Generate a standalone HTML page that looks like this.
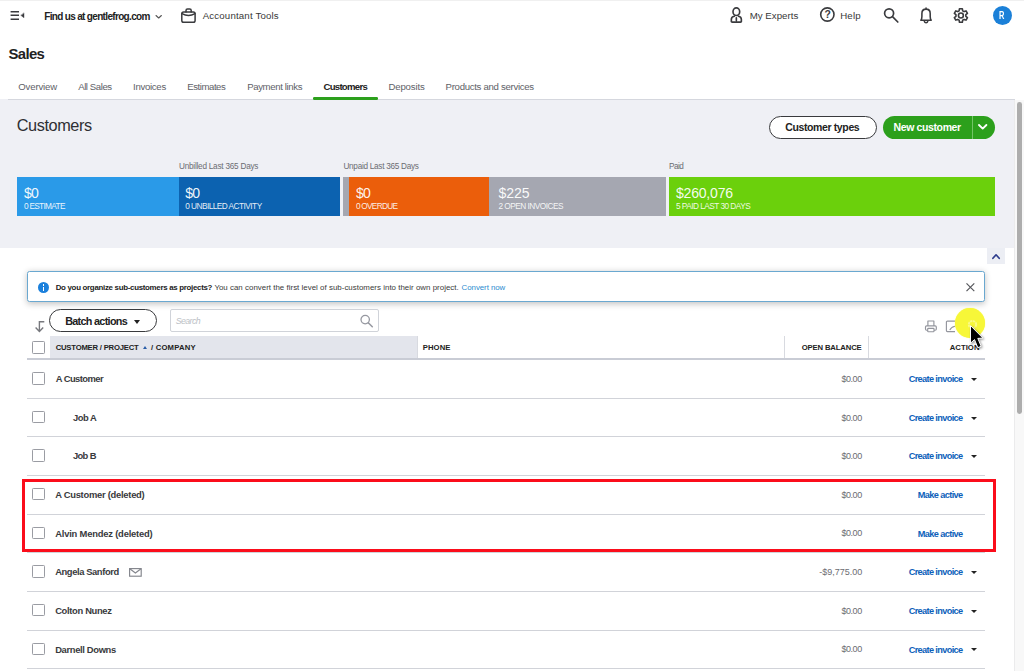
<!DOCTYPE html>
<html><head><meta charset="utf-8">
<style>
*{box-sizing:border-box;margin:0;padding:0}
html,body{width:1024px;height:671px;overflow:hidden;background:#fff;font-family:"Liberation Sans",sans-serif;color:#2b2b2b}
.a{position:absolute}
.t{position:absolute;white-space:nowrap;line-height:1}
.cb{position:absolute;left:32px;width:13px;height:12.5px;border:1px solid #9a9ca3;border-radius:1.3px;background:#fff}
.ln{position:absolute;left:27px;width:958.4px;height:1px;background:#d1d3d9}
.car{position:absolute;left:970.5px;width:0;height:0;border-left:3.2px solid transparent;border-right:3.2px solid transparent;border-top:3.9px solid #222}
svg{position:absolute;overflow:visible}
</style></head><body>
<div class="a" style="left:0;top:0;width:1024px;height:1px;background:#f0f0f0"></div>
<!-- gray band -->
<div class="a" style="left:0;top:99px;width:1014px;height:149.200px;background:#eff0f5"></div>
<div class="a" style="left:8px;top:98.600px;width:1007px;height:1.200px;background:#d5d7de"></div>
<div class="a" style="left:313.400px;top:97.200px;width:65px;height:2.600px;border-radius:1.300px;background:#2ca01c"></div>
<!-- scrollbar -->
<div class="a" style="left:1014.200px;top:99.500px;width:10px;height:572px;background:#f8f8f8;border-left:1.200px solid #ebebec"></div>
<div class="a" style="left:1017.200px;top:102.400px;width:4.800px;height:311.400px;border-radius:2.400px;background:#adadad"></div>

<!-- top bar icons -->
<svg style="left:0;top:0" width="1024" height="32" viewBox="0 0 1024 32" fill="none" stroke="#3a3b3e" stroke-width="1.500" stroke-linecap="round" stroke-linejoin="round">
<path d="M10.600 11.700h8.400M10.600 15.300h8.400M10.600 19.300h8.400" stroke-width="1.600" stroke-linecap="butt"/>
<path d="M24 13.200v4.600l-3-2.300z" fill="#3a3b3e" stroke="#3a3b3e" stroke-width=".4"/>
<path d="M156 15.500l2.700 2.500 2.700-2.500" stroke-width="1.100" stroke="#555"/>
<!-- briefcase -->
<rect x="181.800" y="12" width="13.300" height="10.200" rx="1.800"/>
<path d="M186 12v-1.600a1.500 1.500 0 0 1 1.500-1.500h2.200a1.500 1.500 0 0 1 1.500 1.500V12M182 13.600c4.200 2.500 8.800 2.500 13 0" />
<!-- person -->
<path d="M731.350 21.400V19.300C731.350 17.500 732.500 16.700 734.300 16.300M738.500 16.300C740.300 16.700 741.350 17.500 741.350 19.300V21.400a.8.8 0 0 1-.8.8H732.150a.8.8 0 0 1-.8-.8M736.350 17.800V20.600" stroke-width="1.650"/>
<ellipse cx="736.350" cy="11.650" rx="3.350" ry="3.850" stroke-width="1.650"/>
<!-- help -->
<circle cx="827.350" cy="14.500" r="6.650" stroke-width="1.600"/>
<!-- search -->
<circle cx="889.100" cy="13.300" r="4.500" stroke-width="1.700"/>
<path d="M892.500 16.700l5.300 5.300" stroke-width="1.700"/>
<!-- bell -->
<path d="M920.900 20.300H931.200C930.400 19.300 930.200 18 930.200 16.500V13.400C930.200 10.800 928.400 9.100 926.050 9.100S921.900 10.800 921.900 13.400V16.500C921.900 18 921.700 19.300 920.900 20.300ZM924.400 21.600C924.800 23 927.300 23 927.700 21.600M926.050 9.100V8" stroke-width="1.550"/>
<!-- gear -->
<path d="M962.69 10.83 L962.33 8.75 L959.47 8.75 L959.11 10.83 L957.75 11.61 L955.77 10.88 L954.34 13.37 L955.96 14.72 L955.96 16.28 L954.34 17.63 L955.77 20.12 L957.75 19.39 L959.11 20.17 L959.47 22.25 L962.33 22.25 L962.69 20.17 L964.05 19.39 L966.03 20.12 L967.46 17.63 L965.84 16.28 L965.84 14.72 L967.46 13.37 L966.03 10.88 L964.05 11.61Z" stroke-width="1.600"/>
<circle cx="960.9" cy="15.5" r="2.450" stroke-width="1.600"/>
</svg>
<div class="t" style="left:824.500px;top:9.800px;font-size:10.400px;font-weight:bold;color:#3a3b3e">?</div>
<div class="a" style="left:992.800px;top:6px;width:19px;height:19px;border-radius:50%;background:#1b80d8"></div>

<!-- buttons -->
<div class="a" style="left:768.600px;top:115.500px;width:108.200px;height:23px;border:1.900px solid #393a3d;border-radius:12px;background:#fff"></div>
<div class="a" style="left:883.300px;top:115.600px;width:111.900px;height:23px;border-radius:12px;background:#2ca01c"></div>
<div class="a" style="left:971.600px;top:115.600px;width:1px;height:23px;background:#72c566"></div>
<svg style="left:976px;top:122px" width="14" height="10" viewBox="0 0 14 10"><path d="M3 3l3.700 3.600L10.400 3" stroke="#fff" stroke-width="1.900" fill="none" stroke-linecap="round" stroke-linejoin="round"/></svg>

<!-- tiles -->
<div class="a" style="left:17px;top:177.300px;width:162px;height:38.300px;background:#2a9ae8"></div>
<div class="a" style="left:178.800px;top:177.300px;width:161px;height:38.300px;background:#0c62b0"></div>
<div class="a" style="left:343.300px;top:177.300px;width:146px;height:38.300px;background:#a5a7b1"></div>
<div class="a" style="left:349.300px;top:177.300px;width:139.700px;height:38.300px;background:#eb5e0b"></div>
<div class="a" style="left:489px;top:177.300px;width:177px;height:38.300px;background:#a5a7b1"></div>
<div class="a" style="left:669px;top:177.300px;width:326px;height:38.300px;background:#6bd00c"></div>

<!-- collapse chevron -->
<div class="a" style="left:987px;top:248px;width:17.900px;height:15.800px;background:#eceef4"></div>
<svg style="left:986px;top:248px" width="20" height="16" viewBox="986 248 20 16"><path d="M992.900 258.300l3.150-3.500 3.150 3.500" stroke="#2e3d8d" stroke-width="1.700" fill="none" stroke-linecap="round" stroke-linejoin="round"/></svg>

<!-- banner -->
<div class="a" style="left:27px;top:271.400px;width:958.400px;height:30.800px;border:1.500px solid #6aa8d0;border-radius:2.500px;background:#fff;box-shadow:0 1.500px 6px rgba(0,0,0,.24)"></div>
<div class="a" style="left:38px;top:282px;width:11px;height:11px;border-radius:50%;background:#1b80dc"></div>
<div class="a" style="left:43px;top:284.200px;width:1.400px;height:1.500px;background:#fff"></div>
<div class="a" style="left:43px;top:286.500px;width:1.400px;height:4.200px;background:#fff"></div>
<svg style="left:964.500px;top:281.500px" width="11" height="11" viewBox="0 0 11 11"><path d="M1.500 1.300l7.800 7.800M9.300 1.300l-7.800 7.800" stroke="#55565b" stroke-width="1.150" fill="none"/></svg>

<!-- toolbar -->
<svg style="left:0;top:300px" width="60" height="40" viewBox="0 300 60 40"><path d="M44.300 321.700H39.400V331.200M35.600 327.500l3.800 3.900 3.800-3.900" stroke="#77787d" stroke-width="1.400" fill="none"/></svg>
<div class="a" style="left:48.500px;top:309.400px;width:108.800px;height:23px;border:1.800px solid #393a3d;border-radius:12px;background:#fff"></div>
<div class="a" style="left:133.900px;top:320.300px;width:0;height:0;border-left:3.400px solid transparent;border-right:3.400px solid transparent;border-top:4.200px solid #222"></div>
<div class="a" style="left:170.200px;top:309.300px;width:208.400px;height:22.400px;border:1px solid #d0d3d9;border-radius:2px;background:#fff"></div>
<svg style="left:359px;top:313px" width="16" height="16" viewBox="0 0 16 16"><circle cx="6.200" cy="6.600" r="4.200" stroke="#9698a0" stroke-width="1.300" fill="none"/><path d="M9.300 9.800l4 4" stroke="#9698a0" stroke-width="1.500" stroke-linecap="round"/></svg>
<!-- print/export icons -->
<svg style="left:924px;top:319px" width="14" height="14" viewBox="0 0 14 14" fill="none" stroke="#93959d" stroke-width="1.150" stroke-linejoin="round"><path d="M3.900 6.900V2h6v4.900"/><rect x="1.500" y="6.900" width="10.800" height="4.300" rx="1.100"/><rect x="3.700" y="9.300" width="6.300" height="3.400" rx=".6" fill="#fff"/></svg>
<svg style="left:945px;top:320px" width="12" height="13" viewBox="0 0 12 13" fill="none" stroke="#93959d" stroke-width="1.150" stroke-linejoin="round"><path d="M10 1.100H2.400a1 1 0 0 0-1 1v8.500a1 1 0 0 0 1 1H10"/><path d="M4.800 10c.8-2 2.600-3.300 5.200-3.800"/></svg>

<!-- table header -->
<div class="a" style="left:50.300px;top:336.300px;width:367.200px;height:21.800px;background:#e3e5ec"></div>
<div class="a" style="left:417.300px;top:336.300px;width:1px;height:21.800px;background:#d8dae0"></div>
<div class="a" style="left:784px;top:336.300px;width:1px;height:21.800px;background:#d8dae0"></div>
<div class="a" style="left:867.500px;top:336.300px;width:1px;height:21.800px;background:#d8dae0"></div>
<div class="a" style="left:27px;top:358px;width:958.400px;height:1.800px;background:#c9ccd5"></div>
<div class="cb" style="top:341.300px"></div>
<div class="a" style="left:142.700px;top:345.700px;width:0;height:0;border-left:2.400px solid transparent;border-right:2.400px solid transparent;border-bottom:3px solid #2a5ea8"></div>

<!-- rows -->
<div class="cb" style="top:372.000px"></div><div class="ln" style="top:398px"></div><div class="car" style="top:378px"></div>
<div class="cb" style="top:410.700px"></div><div class="ln" style="top:436px"></div><div class="car" style="top:416.600px"></div>
<div class="cb" style="top:449.400px"></div><div class="ln" style="top:475px"></div><div class="car" style="top:455.300px"></div>
<div class="cb" style="top:487.900px"></div><div class="ln" style="top:514px"></div>
<div class="cb" style="top:526.500px"></div><div class="ln" style="top:552px"></div>
<div class="cb" style="top:565.200px"></div><div class="ln" style="top:591px"></div><div class="car" style="top:571.100px"></div>
<div class="cb" style="top:603.800px"></div><div class="ln" style="top:630px"></div><div class="car" style="top:609.700px"></div>
<div class="cb" style="top:642.500px"></div><div class="ln" style="top:668px"></div><div class="car" style="top:648.300px"></div>
<!-- envelope -->
<svg style="left:129px;top:568.300px" width="13" height="9" viewBox="0 0 13 9" fill="none" stroke="#83858c" stroke-width="1.150"><rect x=".6" y=".6" width="11.600" height="7.600"/><path d="M.8 .8l5.600 4.200 5.600-4.200"/></svg>

<div class="t" style="left:44.20px;top:12.00px;font-size:10px;font-weight:bold;color:#222;letter-spacing:-0.668px;">Find us at gentlefrog.com</div>
<div class="t" style="left:202.70px;top:11.30px;font-size:9.7px;font-weight:normal;color:#383838;letter-spacing:0.159px;">Accountant Tools</div>
<div class="t" style="left:749.70px;top:11.30px;font-size:9.7px;font-weight:normal;color:#383838;letter-spacing:0.016px;">My Experts</div>
<div class="t" style="left:840.20px;top:11.30px;font-size:9.7px;font-weight:normal;color:#383838;letter-spacing:0.188px;">Help</div>
<div class="t" style="left:8.50px;top:47.00px;font-size:14.9px;font-weight:bold;color:#222;letter-spacing:-0.630px;">Sales</div>
<div class="t" style="left:18.30px;top:82.40px;font-size:9.6px;font-weight:normal;color:#606167;letter-spacing:-0.169px;">Overview</div>
<div class="t" style="left:78.20px;top:82.40px;font-size:9.6px;font-weight:normal;color:#606167;letter-spacing:-0.429px;">All Sales</div>
<div class="t" style="left:133.10px;top:82.40px;font-size:9.6px;font-weight:normal;color:#606167;letter-spacing:-0.300px;">Invoices</div>
<div class="t" style="left:187.30px;top:82.40px;font-size:9.6px;font-weight:normal;color:#606167;letter-spacing:-0.453px;">Estimates</div>
<div class="t" style="left:247.20px;top:82.40px;font-size:9.6px;font-weight:normal;color:#606167;letter-spacing:-0.368px;">Payment links</div>
<div class="t" style="left:323.45px;top:82.40px;font-size:9.6px;font-weight:bold;color:#222;letter-spacing:-0.722px;">Customers</div>
<div class="t" style="left:388.45px;top:82.40px;font-size:9.6px;font-weight:normal;color:#606167;letter-spacing:-0.154px;">Deposits</div>
<div class="t" style="left:445.60px;top:82.40px;font-size:9.6px;font-weight:normal;color:#606167;letter-spacing:-0.295px;">Products and services</div>
<div class="t" style="left:16.70px;top:116.90px;font-size:16.3px;font-weight:normal;color:#2e2f32;letter-spacing:-0.402px;">Customers</div>
<div class="t" style="left:785.20px;top:122.00px;font-size:10.5px;font-weight:bold;color:#222;letter-spacing:-0.374px;">Customer types</div>
<div class="t" style="left:893.45px;top:122.00px;font-size:10.5px;font-weight:bold;color:#fff;letter-spacing:-0.366px;">New customer</div>
<div class="t" style="left:178.95px;top:163.00px;font-size:8.2px;font-weight:normal;color:#6b6c72;letter-spacing:-0.224px;">Unbilled Last 365 Days</div>
<div class="t" style="left:343.45px;top:163.00px;font-size:8.2px;font-weight:normal;color:#6b6c72;letter-spacing:-0.266px;">Unpaid Last 365 Days</div>
<div class="t" style="left:669.10px;top:163.00px;font-size:8.2px;font-weight:normal;color:#6b6c72;letter-spacing:-0.597px;">Paid</div>
<div class="t" style="left:23.95px;top:185.80px;font-size:14.1px;font-weight:normal;color:rgba(255,255,255,.95);letter-spacing:-0.688px;">$0</div>
<div class="t" style="left:23.95px;top:201.50px;font-size:8.3px;font-weight:normal;color:rgba(255,255,255,.9);letter-spacing:-0.700px;">0 ESTIMATE</div>
<div class="t" style="left:185.20px;top:185.80px;font-size:14.1px;font-weight:normal;color:rgba(255,255,255,.95);letter-spacing:-0.688px;">$0</div>
<div class="t" style="left:185.20px;top:201.50px;font-size:8.3px;font-weight:normal;color:rgba(255,255,255,.9);letter-spacing:-0.538px;">0 UNBILLED ACTIVITY</div>
<div class="t" style="left:355.95px;top:185.80px;font-size:14.1px;font-weight:normal;color:rgba(255,255,255,.95);letter-spacing:-0.688px;">$0</div>
<div class="t" style="left:355.95px;top:201.50px;font-size:8.3px;font-weight:normal;color:rgba(255,255,255,.9);letter-spacing:-0.744px;">0 OVERDUE</div>
<div class="t" style="left:498.45px;top:185.80px;font-size:14.1px;font-weight:normal;color:rgba(255,255,255,.95);letter-spacing:-0.036px;">$225</div>
<div class="t" style="left:498.45px;top:201.50px;font-size:8.3px;font-weight:normal;color:rgba(255,255,255,.9);letter-spacing:-0.528px;">2 OPEN INVOICES</div>
<div class="t" style="left:675.95px;top:185.80px;font-size:14.1px;font-weight:normal;color:rgba(255,255,255,.95);letter-spacing:-0.235px;">$260,076</div>
<div class="t" style="left:675.95px;top:201.50px;font-size:8.3px;font-weight:normal;color:rgba(255,255,255,.9);letter-spacing:-0.536px;">5 PAID LAST 30 DAYS</div>
<div class="t" style="left:55.70px;top:283.70px;font-size:7.9px;font-weight:bold;color:#222;letter-spacing:-0.294px;">Do you organize sub-customers as projects?</div>
<div class="t" style="left:214.40px;top:283.70px;font-size:7.9px;font-weight:normal;color:#3a3a3a;letter-spacing:0.023px;">You can convert the first level of sub-customers into their own project.</div>
<div class="t" style="left:461.60px;top:283.70px;font-size:7.9px;font-weight:normal;color:#2b8bd0;letter-spacing:-0.060px;">Convert now</div>
<div class="t" style="left:65.20px;top:315.75px;font-size:10.8px;font-weight:bold;color:#222;letter-spacing:-0.691px;">Batch actions</div>
<div class="t" style="left:175.70px;top:316.50px;font-size:8.8px;font-weight:normal;color:#bcbfc6;letter-spacing:-0.575px;font-style:italic;">Search</div>
<div class="t" style="left:55.70px;top:344.00px;font-size:7.7px;font-weight:bold;color:#222;letter-spacing:-0.210px;">CUSTOMER / PROJECT</div>
<div class="t" style="left:150.95px;top:344.00px;font-size:7.7px;font-weight:bold;color:#222;letter-spacing:0.219px;">/ COMPANY</div>
<div class="t" style="left:422.70px;top:344.00px;font-size:7.7px;font-weight:bold;color:#222;letter-spacing:0.102px;">PHONE</div>
<div class="t" style="left:801.70px;top:344.00px;font-size:7.7px;font-weight:bold;color:#222;letter-spacing:-0.138px;">OPEN BALANCE</div>
<div class="t" style="left:949.70px;top:344.00px;font-size:7.7px;font-weight:bold;color:#222;letter-spacing:0.056px;">ACTION</div>
<div class="t" style="left:55.70px;top:374.20px;font-size:9.4px;font-weight:bold;color:#393a3d;letter-spacing:-0.533px;">A Customer</div>
<div class="t" style="left:841.45px;top:375.00px;font-size:9px;font-weight:normal;color:#6b6c72;letter-spacing:-0.445px;">$0.00</div>
<div class="t" style="left:908.70px;top:375.20px;font-size:9.2px;font-weight:bold;color:#0d5fba;letter-spacing:-0.639px;">Create invoice</div>
<div class="t" style="left:72.95px;top:412.82px;font-size:9.4px;font-weight:bold;color:#393a3d;letter-spacing:-0.488px;">Job A</div>
<div class="t" style="left:841.45px;top:413.62px;font-size:9px;font-weight:normal;color:#6b6c72;letter-spacing:-0.445px;">$0.00</div>
<div class="t" style="left:908.70px;top:413.82px;font-size:9.2px;font-weight:bold;color:#0d5fba;letter-spacing:-0.639px;">Create invoice</div>
<div class="t" style="left:72.95px;top:451.44px;font-size:9.4px;font-weight:bold;color:#393a3d;letter-spacing:-0.637px;">Job B</div>
<div class="t" style="left:841.45px;top:452.24px;font-size:9px;font-weight:normal;color:#6b6c72;letter-spacing:-0.445px;">$0.00</div>
<div class="t" style="left:908.70px;top:452.44px;font-size:9.2px;font-weight:bold;color:#0d5fba;letter-spacing:-0.639px;">Create invoice</div>
<div class="t" style="left:55.20px;top:490.06px;font-size:9.4px;font-weight:bold;color:#393a3d;letter-spacing:-0.262px;">A Customer (deleted)</div>
<div class="t" style="left:841.45px;top:490.86px;font-size:9px;font-weight:normal;color:#6b6c72;letter-spacing:-0.445px;">$0.00</div>
<div class="t" style="left:917.70px;top:491.06px;font-size:9.2px;font-weight:bold;color:#0d5fba;letter-spacing:-0.609px;">Make active</div>
<div class="t" style="left:55.20px;top:528.68px;font-size:9.4px;font-weight:bold;color:#393a3d;letter-spacing:-0.194px;">Alvin Mendez (deleted)</div>
<div class="t" style="left:841.45px;top:529.48px;font-size:9px;font-weight:normal;color:#6b6c72;letter-spacing:-0.445px;">$0.00</div>
<div class="t" style="left:917.70px;top:529.68px;font-size:9.2px;font-weight:bold;color:#0d5fba;letter-spacing:-0.609px;">Make active</div>
<div class="t" style="left:55.20px;top:567.30px;font-size:9.4px;font-weight:bold;color:#393a3d;letter-spacing:-0.406px;">Angela Sanford</div>
<div class="t" style="left:819.20px;top:568.10px;font-size:9px;font-weight:normal;color:#6b6c72;letter-spacing:-0.005px;">-$9,775.00</div>
<div class="t" style="left:908.70px;top:568.30px;font-size:9.2px;font-weight:bold;color:#0d5fba;letter-spacing:-0.639px;">Create invoice</div>
<div class="t" style="left:55.20px;top:605.92px;font-size:9.4px;font-weight:bold;color:#393a3d;letter-spacing:-0.334px;">Colton Nunez</div>
<div class="t" style="left:841.45px;top:606.72px;font-size:9px;font-weight:normal;color:#6b6c72;letter-spacing:-0.445px;">$0.00</div>
<div class="t" style="left:908.70px;top:606.92px;font-size:9.2px;font-weight:bold;color:#0d5fba;letter-spacing:-0.639px;">Create invoice</div>
<div class="t" style="left:55.20px;top:644.54px;font-size:9.4px;font-weight:bold;color:#393a3d;letter-spacing:-0.344px;">Darnell Downs</div>
<div class="t" style="left:841.45px;top:645.34px;font-size:9px;font-weight:normal;color:#6b6c72;letter-spacing:-0.445px;">$0.00</div>
<div class="t" style="left:908.70px;top:645.54px;font-size:9.2px;font-weight:bold;color:#0d5fba;letter-spacing:-0.639px;">Create invoice</div>
<div class="t" style="left:998.90px;top:11.00px;font-size:10.3px;font-weight:bold;color:#fff;letter-spacing:0.000px;transform:scaleX(0.726);transform-origin:0 0;">R</div>
<!-- red box -->
<div class="a" style="left:21.800px;top:479px;width:974.400px;height:72.800px;border:3px solid #fb0d1b"></div>
<!-- yellow highlight + faint gear + cursor -->
<div class="a" style="left:954.800px;top:307.800px;width:30.600px;height:30.600px;border-radius:50%;background:#f7f738;box-shadow:0 0 1px #f7f738"></div>
<svg style="left:966px;top:318px" width="14" height="14" viewBox="0 0 14 14"><circle cx="6.500" cy="6.600" r="3.700" stroke="rgba(255,255,255,.4)" stroke-width="2" fill="none" stroke-dasharray="2.300 .6"/></svg>
<svg style="left:0;top:0" width="1024" height="671" viewBox="0 0 1024 671"><path d="M970.500 325.600V343.200L974.500 339.600L977.800 347.700L981.200 346.300L977.800 338.400L982.900 338.100Z" fill="#000" stroke="#fff" stroke-width="1" stroke-linejoin="round" style="filter:drop-shadow(1px 1.500px 1.200px rgba(0,0,0,.4))"/></svg>

</body></html>
